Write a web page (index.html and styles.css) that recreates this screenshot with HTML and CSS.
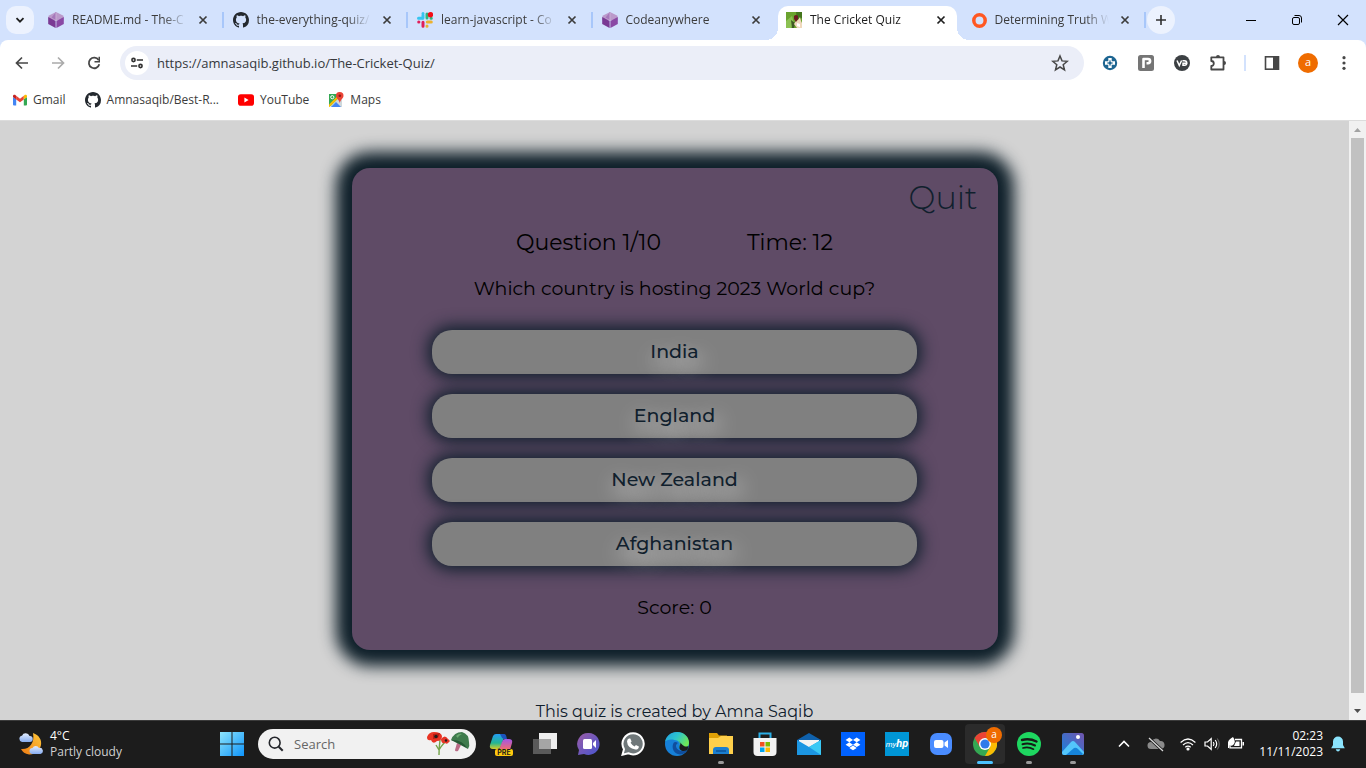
FILE: index.html
```html
<!DOCTYPE html>
<html lang="en">
<head>
<meta charset="utf-8">
<meta name="viewport" content="width=device-width, initial-scale=1">
<title>The Cricket Quiz</title>
<link rel="stylesheet" href="styles.css">
</head>
<body>
<svg class="defs" aria-hidden="true">
  <defs>
    <symbol id="close" viewBox="0 0 16 16"><path d="M4.500 4.500l7 7M11.500 4.500l-7 7" fill="none" stroke="currentColor" stroke-width="1.700"/></symbol>
    <symbol id="cube" viewBox="0 0 16 16"><path fill="#bb9acb" d="M8 0l7.500 3.700v4L8 8.600.500 7.700v-4z"/><path fill="#a678bb" d="M8 0v8L3.500 5.500z"/><path fill="#7a3a94" d="M.2 5l7.400 4v7L.2 12z"/><path fill="#8a49a5" d="M15.800 5L8.400 9v7l7.400-4z"/><path fill="#c9aed6" d="M7.500 1h1v8h-1z"/></symbol>
    <symbol id="github" viewBox="0 0 16 16"><path fill="#24292f" d="M8 0C3.580 0 0 3.580 0 8c0 3.540 2.290 6.530 5.470 7.590.4.070.55-.17.55-.38 0-.19-.01-.82-.01-1.490-2.010.37-2.530-.49-2.690-.94-.09-.23-.48-.94-.82-1.130-.28-.15-.68-.52-.01-.53.63-.01 1.080.58 1.230.82.72 1.210 1.870.87 2.330.66.070-.52.28-.87.51-1.070-1.780-.2-3.640-.89-3.640-3.950 0-.87.31-1.590.82-2.150-.08-.2-.36-1.020.08-2.120 0 0 .67-.21 2.200.82.64-.18 1.320-.27 2-.27s1.360.09 2 .27c1.530-1.040 2.200-.82 2.200-.82.44 1.100.16 1.920.08 2.120.51.56.82 1.270.82 2.150 0 3.070-1.870 3.750-3.650 3.950.29.25.54.73.54 1.480 0 1.070-.01 1.930-.01 2.200 0 .21.15.46.55.38A8.010 8.010 0 0 0 16 8c0-4.420-3.580-8-8-8z"/></symbol>
  </defs>
</svg>

<header class="browser">
  <div class="tabstrip">
    <button class="tab-search" aria-label="Search tabs"><svg width="12" height="12" viewBox="0 0 12 12"><path d="M2.500 4.200L6 7.700l3.500-3.500" fill="none" stroke="#1f1f1f" stroke-width="1.800"/></svg></button>
    <div class="tabs">
      <div class="tab divided"><button class="tab-link"><svg width="16" height="16"><use href="#cube"/></svg><span class="tab-title">README.md - The-C</span></button><button class="tab-close" aria-label="Close tab"><svg width="16" height="16"><use href="#close"/></svg></button></div>
      <div class="tab divided"><button class="tab-link"><svg width="16" height="16"><use href="#github"/></svg><span class="tab-title">the-everything-quiz/</span></button><button class="tab-close" aria-label="Close tab"><svg width="16" height="16"><use href="#close"/></svg></button></div>
      <div class="tab divided"><button class="tab-link"><svg width="16" height="16" viewBox="0 0 16 16"><g stroke-width="3" stroke-linecap="round"><path stroke="#36c5f0" d="M1.500 6.200h4M6 1.500v.2"/><path stroke="#36c5f0" d="M6 3.500v2.500"/><path stroke="#2eb67d" d="M10 2v4M14.300 6.200h-.3"/><path stroke="#ecb22e" d="M10.300 10h4M10 14.300v-.2"/><path stroke="#e01e5a" d="M6 10.200v4M1.700 10h.2"/></g><circle cx="13.500" cy="2.700" r="2.700" fill="#f30d16"/></svg><span class="tab-title">learn-javascript - Co</span></button><button class="tab-close" aria-label="Close tab"><svg width="16" height="16"><use href="#close"/></svg></button></div>
      <div class="tab"><button class="tab-link"><svg width="16" height="16"><use href="#cube"/></svg><span class="tab-title">Codeanywhere</span></button><button class="tab-close" aria-label="Close tab"><svg width="16" height="16"><use href="#close"/></svg></button></div>
      <div class="tab active"><button class="tab-link"><svg width="16" height="16" viewBox="0 0 16 16"><path fill="#6ba32e" d="M0 0h16v16H0z"/><path fill="#8cc152" d="M0 9l6-5 2 7-3 5H0z"/><path fill="#43751c" d="M10 0h6v6l-5 2z"/><path fill="#3f5a24" d="M5 8l4 3-1 5H6z"/><path fill="#f0d9bd" d="M10 9l2-1 2-3 1 4 1 2v5h-5l-3-4z"/><path fill="#fff" d="M11 11l3 1v3l-3-1z"/><path fill="#6c1a22" d="M8 4q2-2 4 0v3l-2 3-2-3z"/></svg><span class="tab-title">The Cricket Quiz</span></button><button class="tab-close" aria-label="Close tab"><svg width="16" height="16"><use href="#close"/></svg></button></div>
      <div class="tab divided"><button class="tab-link"><svg width="16" height="16" viewBox="0 0 16 16"><circle cx="8.500" cy="8.500" r="5.700" fill="none" stroke="#ff5722" stroke-width="3.500"/></svg><span class="tab-title">Determining Truth W</span></button><button class="tab-close" aria-label="Close tab"><svg width="16" height="16"><use href="#close"/></svg></button></div>
    </div>
    <button class="new-tab" aria-label="New tab"><svg width="12" height="12" viewBox="0 0 12 12"><path d="M6 1v10M1 6h10" stroke="#303030" stroke-width="1.600"/></svg></button>
    <div class="window-controls">
      <button aria-label="Minimise"><svg width="12" height="12" viewBox="0 0 12 12"><path d="M1 6.500h10" stroke="#000"/></svg></button>
      <button aria-label="Restore"><svg width="12" height="12" viewBox="0 0 12 12" fill="none" stroke="#000"><rect x="1.500" y="3.500" width="7" height="7" rx="1.500"/><path d="M3.500 1.500H8a2.500 2.500 0 0 1 2.500 2.500v4.500"/></svg></button>
      <button aria-label="Close window"><svg width="12" height="12" viewBox="0 0 12 12"><path d="M1 1l10 10M11 1L1 11" stroke="#000" stroke-width="1.200"/></svg></button>
    </div>
  </div>

  <div class="toolbar">
    <button class="tool" aria-label="Back"><svg width="16" height="16" viewBox="0 0 16 16" fill="none" stroke="#474747" stroke-width="1.700"><path d="M14 8H3M8 2.500L2.500 8 8 13.500"/></svg></button>
    <button class="tool" aria-label="Forward"><svg width="16" height="16" viewBox="0 0 16 16" fill="none" stroke="#ababab" stroke-width="1.700"><path d="M2 8h11M8 2.500L13.500 8 8 13.500"/></svg></button>
    <button class="tool" aria-label="Reload"><svg width="16" height="16" viewBox="0 0 16 16"><path d="M12.600 5A5.300 5.300 0 1 0 13.300 9.300" fill="none" stroke="#474747" stroke-width="1.800"/><path fill="#474747" d="M14 1.800v5.700H8.500V6h4V1.800z"/></svg></button>
    <div class="omnibox">
      <button class="site-info" aria-label="View site information"><svg width="14" height="14" viewBox="0 0 14 14" fill="none" stroke="#303030" stroke-width="1.600"><circle cx="3.500" cy="4" r="1.600"/><path d="M6.800 4H13M1 10h6.200"/><circle cx="10.500" cy="10" r="1.600"/></svg></button>
      <input class="address" type="text" aria-label="Address" value="https://amnasaqib.github.io/The-Cricket-Quiz/">
      <button class="tool star" aria-label="Bookmark this page"><svg width="18" height="18" viewBox="0 0 18 18"><path d="M9 2l2 4.900 5.300.4-4.100 3.400 1.300 5.100L9 13l-4.500 2.800 1.300-5.100-4.100-3.400 5.300-.4z" fill="none" stroke="#474747" stroke-width="1.500"/></svg></button>
    </div>
    <div class="extensions">
      <button class="tool" aria-label="Extension"><svg width="16" height="16" viewBox="0 0 16 16"><circle cx="8" cy="8" r="7.200" fill="#1d6591"/><path d="M8 3v10M3 8h10" stroke="#fff" stroke-width="3.400"/><circle cx="8" cy="8" r="1.500" fill="#1d6591"/><path d="M8 5.200v5.600M5.200 8h5.600" stroke="#1d6591"/></svg></button>
      <button class="tool" aria-label="Extension"><svg width="16" height="16" viewBox="0 0 16 16"><rect width="16" height="16" rx="2.500" fill="#757575"/><path d="M5.500 13V4h4.500a2 2 0 0 1 0 4.200H8.500" fill="none" stroke="#fff" stroke-width="2.600" stroke-linejoin="round"/></svg></button>
      <button class="tool" aria-label="Extension"><svg width="16" height="16" viewBox="0 0 16 16"><circle cx="8" cy="8" r="8" fill="#3c4043"/><path d="M3 5.500l2.300 5L7.600 5.500M8.500 5.800h2a2.200 2.200 0 0 1 0 4.500H9V8.200h4.500" fill="none" stroke="#fff" stroke-width="1.500"/></svg></button>
      <button class="tool" aria-label="Extensions"><svg width="18" height="18" viewBox="0 0 18 18"><path d="M2.300 3.300H14.500V15.500H2.300V12a2.500 2.500 0 0 0 0-5z" fill="none" stroke="#474747" stroke-width="1.800" stroke-linejoin="round"/><path fill="#474747" d="M7 3a2 2 0 0 1 4 0zM15 7a2 2 0 0 1 0 4z"/></svg></button>
      <span class="rule"></span>
      <button class="tool" aria-label="Side panel"><svg width="16" height="16" viewBox="0 0 16 16"><rect x="1.500" y="1.800" width="13" height="12.400" fill="none" stroke="#474747" stroke-width="1.600"/><path fill="#474747" d="M9 1.500h5.500v13H9z"/></svg></button>
      <button class="tool" aria-label="Profile"><span class="avatar">a</span></button>
      <button class="tool" aria-label="Menu"><svg width="16" height="16" viewBox="0 0 16 16" fill="#474747"><circle cx="8" cy="2.700" r="1.600"/><circle cx="8" cy="8" r="1.600"/><circle cx="8" cy="13.300" r="1.600"/></svg></button>
    </div>
  </div>

  <nav class="bookmarks" aria-label="Bookmarks">
    <a href="#gmail"><svg width="14" height="16" viewBox="0 0 14 16"><path fill="#4285f4" d="M0 5l3.200 2.200v6.300H1a1 1 0 0 1-1-1z"/><path fill="#34a853" d="M14 5l-3.200 2.200v6.300H13a1 1 0 0 0 1-1z"/><path fill="#ea4335" d="M3.200 3.800L7 6.700l3.800-2.900v3.600L7 10.300 3.200 7.400z"/><path fill="#c5221f" d="M0 4.300C0 2.700 1.700 2.500 2.600 3.200l.6.600v3.600L0 5z"/><path fill="#fbbc04" d="M14 4.300c0-1.600-1.700-1.800-2.600-1.100l-.6.600v3.600L14 5z"/></svg>Gmail</a>
    <a href="#repo"><svg width="16" height="16"><use href="#github"/></svg>Amnasaqib/Best-R...</a>
    <a href="#youtube"><svg width="16" height="16" viewBox="0 0 16 16"><rect y="2.300" width="16" height="11.400" rx="2.800" fill="#f00"/><path fill="#fff" d="M6.400 5.600v4.800L10.600 8z"/></svg>YouTube</a>
    <a href="#maps"><svg width="16" height="16" viewBox="0 0 16 16"><path fill="#34a853" d="M1 2h12v2L3 14H1z"/><path fill="#cfd8dc" d="M2 15L12 5l2 3v7z"/><path fill="#4285f4" d="M3 15l5-5 5 5z"/><path fill="#fbbc04" d="M1 12.500L10.500 3l1.500 1.500L1.500 15H1z"/><circle cx="4.300" cy="5.200" r="1.600" fill="none" stroke="#fff"/><path fill="#ea4335" d="M11.800 0A3.700 3.700 0 0 1 15.500 3.700c0 2.500-2.900 3.500-3.700 7.300C11 7.200 8 6.200 8 3.700A3.700 3.700 0 0 1 11.800 0z"/><circle cx="11.800" cy="3.700" r="1.300" fill="#8c1a12"/></svg>Maps</a>
  </nav>
</header>

<div class="viewport">
  <main class="page">
    <section class="quiz">
      <a class="quit" href="#quit">Quit</a>
      <div class="status"><span>Question 1/10</span><span>Time: 12</span></div>
      <h1 class="question">Which country is hosting 2023 World cup?</h1>
      <div class="options">
        <button>India</button>
        <button>England</button>
        <button>New Zealand</button>
        <button>Afghanistan</button>
      </div>
      <p class="score">Score: 0</p>
    </section>
    <footer class="credit">This quiz is created by Amna Saqib</footer>
  </main>
  <div class="scrollbar" aria-hidden="true">
    <svg width="17" height="17" viewBox="0 0 17 17"><path fill="#a3a3a3" d="M5 11h7L8.500 7z"/></svg>
    <span class="thumb"></span>
    <svg width="17" height="17" viewBox="0 0 17 17"><path fill="#505050" d="M5 6h7l-3.500 4z"/></svg>
  </div>
</div>

<footer class="taskbar">
  <button class="weather">
    <svg width="24" height="24" viewBox="0 0 24 24"><defs><linearGradient id="moon" x1="1" y1="0" x2="0" y2="1"><stop offset="0" stop-color="#ffc93c"/><stop offset="1" stop-color="#ee7a12"/></linearGradient><linearGradient id="cloud" x1="0" y1="0" x2="0" y2="1"><stop offset="0" stop-color="#e4eeff"/><stop offset="1" stop-color="#86acf0"/></linearGradient></defs><path fill="url(#moon)" d="M14 1c6 2 9 7 8 12s-6 10-12 9.500C6 22 3.500 20 2 17c8 1 14-6 12-16z"/><path fill="url(#cloud)" d="M3 10a3.200 3.200 0 0 1 0-6.300A4 4 0 0 1 10.500 4 3 3 0 0 1 11 10z"/><path fill="url(#cloud)" d="M13.500 22a3 3 0 0 1 0-6A3.600 3.600 0 0 1 20 16a3 3 0 0 1 1.500 6z"/></svg>
    <span class="weather-text"><span class="temp">4°C</span><span class="sky">Partly cloudy</span></span>
  </button>
  <button class="app" aria-label="Start"><svg width="24" height="24" viewBox="0 0 24 24"><defs><linearGradient id="win" x1="0" y1="0" x2="1" y2="1"><stop offset="0" stop-color="#8ee5fb"/><stop offset="1" stop-color="#0e94fb"/></linearGradient></defs><path fill="url(#win)" d="M0 0h11.500v11.500H0zM12.500 0H24v11.500H12.500zM0 12.500h11.500V24H0zM12.500 12.500H24V24H12.500z"/></svg></button>
  <label class="search">
    <svg width="16" height="16" viewBox="0 0 16 16"><circle cx="6.700" cy="6.700" r="5.400" fill="none" stroke="#24262b" stroke-width="1.600"/><path d="M10.700 10.700l4 4" stroke="#24262b" stroke-width="2"/></svg>
    <input type="search" aria-label="Search" placeholder="Search">
    <svg width="43" height="26" viewBox="0 0 43 26"><path d="M13 9q-1 8-1 15M12.500 18q4-6 7-8M12 19l-3-5" fill="none" stroke="#72a348" stroke-width="1.400"/><path fill="#e93323" d="M0 6q2-5 7-5 7 0 8 4 0 5-5 5-4 4-6-1-4 1-4-3z"/><path fill="#b91c12" d="M6 3l7-1-2 5-5 1z"/><circle cx="9" cy="5.500" r="1.700" fill="#231b1b"/><path fill="#e63527" d="M14 8q4-5 7 0 3 2 1 3-2 3-4 1-4 1-4-4z"/><circle cx="19" cy="9.500" r="1.200" fill="#231b1b"/><path fill="#b96b86" d="M30 12l4 2-3 6q-3 1-3-1z"/><path fill="#3f7b4d" d="M24 9q3-8 11-8 7 2 7 10 1 4-1 7-5-6-17-9z"/><path fill="#255a35" d="M24 9q11-1 17 9-9-5-17-9z"/><path fill="#6aaa70" d="M29 5q3-3 6-2-4 2-4 4z"/></svg>
  </label>
  <div class="apps">
    <button class="app" aria-label="Copilot"><svg width="24" height="24" viewBox="0 0 24 24"><defs><linearGradient id="cpa" x1="0" y1="0" x2="0" y2="1"><stop offset="0" stop-color="#249cf4"/><stop offset=".6" stop-color="#23b693"/><stop offset="1" stop-color="#d6cd27"/></linearGradient><linearGradient id="cpb" x1="0" y1="0" x2="0" y2="1"><stop offset="0" stop-color="#a156e8"/><stop offset="1" stop-color="#f66d69"/></linearGradient></defs><path fill="url(#cpa)" d="M7 2h7q2 0 1.500 2L12 14q-1 3-4 3H4q-4 0-3-4L4 4q1-2 3-2z"/><path fill="#1b54bd" d="M11 2h4q2 0 2.500 3l.5 2h-3q-2 0-3-3z"/><path fill="url(#cpb)" d="M16 7h4q4 0 3 4l-2 7H10l3-8q1-3 3-3z"/><rect x="6" y="17" width="18" height="7" rx="2" fill="#ffc90e"/><text x="15" y="23" class="pre" text-anchor="middle">PRE</text></svg></button>
    <button class="app" aria-label="Task view"><svg width="24" height="24" viewBox="0 0 24 24"><path fill="#eee" d="M6 1h18v16H6z"/><path fill="#5a5a5a" d="M0 7h18v15H0z"/><path fill="#a5a5a5" d="M6 7h12v10H6z"/></svg></button>
    <button class="app" aria-label="Chat"><svg width="24" height="24" viewBox="0 0 24 24"><defs><linearGradient id="chat" x1="0" y1="0" x2="1" y2="1"><stop offset="0" stop-color="#9b5ca6"/><stop offset="1" stop-color="#4755d0"/></linearGradient></defs><path fill="url(#chat)" d="M12 1a11 11 0 1 1-5 21L1 23l1-5A11 11 0 0 1 12 1z"/><rect x="6" y="7" width="9" height="10" rx="1.500" fill="#fff"/><path fill="#fff" d="M16 11l3-3v8l-3-3z"/></svg></button>
    <button class="app" aria-label="WhatsApp"><svg width="24" height="24" viewBox="0 0 24 24"><path d="M12.200 1.200a10.600 10.600 0 1 1-5 20L1.500 22.700 3 17.200a10.600 10.600 0 0 1 9.200-16z" fill="#6f7779" stroke="#fff" stroke-width="2"/><path fill="#fff" d="M8 6.500h1.300l1.300 3-1 1.300q1.400 2.500 4 3.600l1.300-1.500 3 1.500q0 3-3.400 3.200-8-1.500-8.500-8.200.2-2.200 2-2.900z"/></svg></button>
    <button class="app" aria-label="Edge"><svg width="24" height="24" viewBox="0 0 24 24"><defs><linearGradient id="edge" x1="0" y1="0" x2="1" y2=".5"><stop offset="0" stop-color="#209fe2"/><stop offset=".5" stop-color="#2cc4cf"/><stop offset="1" stop-color="#6ee857"/></linearGradient></defs><circle cx="12" cy="12" r="12" fill="#1680d8"/><path fill="url(#edge)" d="M0 10C1 4 6 0 12 0c7 0 12 5 12 10.500 0 4-3 6-6 6-3 0-4.500-1-3.500-2.500C16 11 13 8 9.500 8 5 7 1 8 0 10z"/><path fill="#104e9d" d="M8.500 11C6 16 9 22 15 22.500c3 0 6-2 7.500-4.500-5 2.500-11 .5-11.500-4 0-1.500 1-2.500 2-3-2-1.500-3.500-1.500-4.500 0z"/><path fill="#1c1c1c" d="M14.500 14c2-3 0-5 0-4 3 2 4 6 9 4l-1 4c-4 2-9 1-8-4z"/></svg></button>
    <button class="app running" aria-label="File Explorer"><svg width="24" height="24" viewBox="0 0 24 24"><path fill="#e0a106" d="M0 1h8l2 2.500h8V8H0z"/><path fill="#ffd04b" d="M0 6h9l3-2h12v18H0z"/><path fill="#1b7fd0" d="M4 22v-4q0-3 3-3h10q3 0 3 3v4z"/><path fill="#0f5ea8" d="M7 18h10v2H7z"/></svg></button>
    <button class="app" aria-label="Microsoft Store"><svg width="24" height="24" viewBox="0 0 24 24"><path d="M6.500 7V1.500h11V7" fill="none" stroke="#2aaee6" stroke-width="2"/><path fill="#f2f2f2" d="M.5 6h23v14a4 4 0 0 1-4 4h-15a4 4 0 0 1-4-4z"/><path fill="#f25022" d="M7 10h4.500v4.500H7z"/><path fill="#7fba00" d="M12.500 10H17v4.500h-4.500z"/><path fill="#00a4ef" d="M7 15.500h4.500V20H7z"/><path fill="#ffb900" d="M12.500 15.500H17V20h-4.500z"/></svg></button>
    <button class="app" aria-label="Mail"><svg width="24" height="24" viewBox="0 0 24 24"><path fill="#0f61ac" d="M0 8l12-7 12 7v8H0z"/><path fill="#f3f3f3" d="M2 8h20v7l-10 3-10-3z"/><path fill="#1c96e2" d="M0 8l12 7 12-7v15H0z"/><path fill="#3ac8f4" d="M24 8v15L12 15z"/></svg></button>
    <button class="app" aria-label="Dropbox"><svg width="24" height="24" viewBox="0 0 24 24"><path fill="#0061fe" d="M0 0h24v24H0z"/><path fill="#fff" d="M8.300 5.500L12 7.900l-3.700 2.400-3.700-2.400zM15.700 5.500l3.700 2.400-3.700 2.400L12 7.900zM8.300 10.300l3.700 2.400-3.700 2.400-3.700-2.400zM15.700 10.300l3.700 2.400-3.700 2.400-3.700-2.400zM12 13.500l3.700 2.400-3.700 2.400-3.700-2.400z"/></svg></button>
    <button class="app" aria-label="myHP"><span class="myhp">my<b>hp</b></span></button>
    <button class="app" aria-label="Zoom"><svg width="24" height="24" viewBox="0 0 24 24"><rect x="1" y="1" width="22" height="22" rx="7" fill="#4a8cff"/><rect x="5" y="8" width="9.500" height="8" rx="2" fill="#fff"/><path fill="#fff" d="M15.500 10.500L19 8v8l-3.500-2.500z"/></svg></button>
    <button class="app running current" aria-label="Chrome"><svg width="24" height="24" viewBox="0 0 24 24"><circle cx="12" cy="12" r="12" fill="#34a853"/><path fill="#ea4335" d="M1.600 6A12 12 0 0 1 22.400 6H12L7 15z"/><path fill="#fbbc04" d="M22.400 6A12 12 0 0 1 12 24l5.200-9L16 6z"/><circle cx="12" cy="12" r="6" fill="#fff"/><circle cx="12" cy="12" r="4.600" fill="#2f7bea"/></svg><span class="avatar badge">a</span></button>
    <button class="app running" aria-label="Spotify"><svg width="24" height="24" viewBox="0 0 24 24"><circle cx="12" cy="12" r="12" fill="#1ed760"/><g fill="none" stroke="#151b17" stroke-linecap="round"><path stroke-width="2.400" d="M5 8q7.500-2 14.500 1.500"/><path stroke-width="2" d="M5.500 12.200q6.500-1.800 12.500 1.300"/><path stroke-width="1.700" d="M6 16q5.500-1.500 10.500 1.200"/></g></svg></button>
    <button class="app running" aria-label="Photos"><svg width="24" height="24" viewBox="0 0 24 24"><defs><linearGradient id="photo" x1="0" y1="1" x2="1" y2="0"><stop offset="0" stop-color="#1782dc"/><stop offset="1" stop-color="#7254ad"/></linearGradient></defs><rect x="1" y="1" width="22" height="22" rx="2.500" fill="url(#photo)"/><path fill="#53c6fb" d="M1 20l9-10q2-2 4 0l9 10v1a2 2 0 0 1-2 2H3a2 2 0 0 1-2-2z"/><path fill="#1684da" d="M5 23l8-7q2-1 4 1l5 5-1 1z"/><circle cx="17" cy="5" r="2" fill="#fff"/></svg></button>
  </div>
  <div class="tray">
    <button class="tray-icon" aria-label="Show hidden icons"><svg width="12" height="12" viewBox="0 0 12 12"><path d="M1 8.500l5-5 5 5" fill="none" stroke="#fff" stroke-width="1.600"/></svg></button>
    <button class="tray-icon" aria-label="OneDrive"><svg width="18" height="16" viewBox="0 0 18 16"><path fill="#8a8a8a" d="M4 13a3.500 3.500 0 0 1 0-7 5 5 0 0 1 9-1 4 4 0 0 1 1 8z"/><path d="M2 2l14 13" stroke="#1c1c1c" stroke-width="3"/><path d="M2 2l14 13" stroke="#ddd" stroke-width="1.200"/></svg></button>
    <button class="status-icons" aria-label="Network, volume and battery">
      <svg width="16" height="16" viewBox="0 0 16 16" fill="none" stroke="#fff" stroke-width="1.200"><path d="M.6 6.500q7.400-7 14.800 0M3 9q5-4.800 10 0M5.300 11.300q2.700-2.500 5.400 0"/><circle cx="8" cy="13" r="1" fill="#fff"/></svg>
      <svg width="16" height="16" viewBox="0 0 16 16" fill="none" stroke="#fff" stroke-width="1.200"><path d="M1 6h2.500l3.700-3.300v10.600L3.500 10H1z"/><path d="M9.300 6q1.500 2 0 4M11.200 4q3 4 0 8"/><path stroke="#606060" d="M13.200 2.500q4.200 5.500 0 11"/></svg>
      <svg width="16" height="16" viewBox="0 0 16 16"><path d="M7 3.500h6.500v8.300H2V9" fill="none" stroke="#fff" stroke-width="1.300"/><path fill="#fff" d="M14.500 6H16v3.500h-1.500zM8 5.500h3.500V10H6zM0 9q-1-5 5-8 3 4 1 7-2 3-4.500 1L1 12H0z"/></svg>
    </button>
    <button class="clock"><span>02:23</span><span>11/11/2023</span></button>
    <button class="bell" aria-label="Notifications"><svg width="14" height="16" viewBox="0 0 14 16"><path fill="#8be4fd" d="M7 .5a5 5 0 0 1 5 5V9l1.800 3.300H.2L2 9V5.500a5 5 0 0 1 5-5zM4.700 13.300h4.600Q8.500 15.500 7 15.500t-2.300-2.200z"/></svg></button>
  </div>
</footer>
</body>
</html>
```

FILE: styles.css
```css
* {
  box-sizing: border-box;
}

body {
  margin: 0;
  height: 100vh;
  display: flex;
  flex-direction: column;
  overflow: hidden;
  font: 12px/16px "Segoe UI", "Open Sans", "Noto Sans", sans-serif;
  color: #3c3c3c;
}

button {
  display: flex;
  align-items: center;
  justify-content: center;
  margin: 0;
  padding: 0;
  border: 0;
  background: none;
  color: inherit;
  font: inherit;
}

svg {
  flex: none;
}

.defs {
  position: absolute;
  width: 0;
  height: 0;
}

/* Tab strip */
.browser {
  flex: none;
  background: #d3e2fd;
}

.tabstrip {
  display: flex;
  align-items: center;
  height: 40px;
  padding-left: 6px;
}

.tab-search,
.new-tab {
  flex: none;
  width: 28px;
  height: 28px;
  border-radius: 10px;
  background: #ecf2fe;
}

.new-tab {
  border-radius: 50%;
}

.tabs {
  display: flex;
  flex: 1;
  align-self: stretch;
  min-width: 0;
  margin-left: 6px;
}

.tab {
  position: relative;
  display: flex;
  align-items: center;
  gap: 8px;
  flex: 1 1 0;
  min-width: 0;
  margin: 6px 6px 0 0;
  padding: 0 8px 6px;
}

.tab-link {
  flex: 1;
  min-width: 0;
  gap: 8px;
}

.tab-title {
  flex: 1;
  overflow: hidden;
  white-space: nowrap;
  text-align: left;
  -webkit-mask-image: linear-gradient(to left, transparent, #000 24px);
  mask-image: linear-gradient(to left, transparent, #000 24px);
}

.tab-close {
  flex: none;
}

.tab.divided::after {
  content: "";
  position: absolute;
  right: -5px;
  top: 6px;
  width: 2px;
  height: 16px;
  background: #a8c7fa;
}

.tab.active {
  border-radius: 10px 10px 0 0;
  background: #fff;
  color: #1f1f1f;
}

.tab.active::before,
.tab.active::after {
  content: "";
  position: absolute;
  bottom: 0;
  width: 12px;
  height: 12px;
}

.tab.active::before {
  right: 100%;
  background: radial-gradient(circle at 0 0, transparent 12px, #fff 12px);
}

.tab.active::after {
  left: 100%;
  background: radial-gradient(circle at 100% 0, transparent 12px, #fff 12px);
}

.window-controls {
  display: flex;
  align-self: stretch;
  margin-left: 53px;
}

.window-controls button {
  width: 46px;
}

/* Toolbar */
.toolbar {
  display: flex;
  align-items: center;
  height: 46px;
  padding: 0 4px;
  border-radius: 8px 8px 0 0;
  background: #fff;
}

.tool {
  flex: none;
  width: 36px;
  height: 34px;
}

.omnibox {
  display: flex;
  align-items: center;
  flex: 1;
  height: 34px;
  margin: 0 8px;
  padding: 0 6px 0 5px;
  border-radius: 17px;
  background: #ebeef8;
}

.site-info {
  flex: none;
  width: 24px;
  height: 24px;
  border-radius: 50%;
  background: #fff;
}

.address {
  flex: 1;
  min-width: 0;
  padding: 0 8px;
  border: 0;
  background: none;
  color: #35383c;
  font: 13px/20px "Segoe UI", "Open Sans", "Noto Sans", sans-serif;
}

.extensions {
  display: flex;
  align-items: center;
}

.rule {
  width: 2px;
  height: 16px;
  margin: 0 8px;
  background: #d3e2fd;
}

.avatar {
  width: 20px;
  height: 20px;
  border-radius: 50%;
  background: #ef6c00;
  color: #fff;
  font-size: 11px;
  line-height: 18px;
  text-align: center;
}

/* Bookmarks */
.bookmarks {
  display: flex;
  gap: 19px;
  padding: 0 13px 6px;
  border-bottom: 1px solid #dcdcdc;
  background: #fff;
}

.bookmarks a {
  display: flex;
  align-items: center;
  gap: 6px;
  height: 28px;
  color: inherit;
  text-decoration: none;
}

/* Quiz page */
.viewport {
  display: flex;
  flex: 1;
  min-height: 0;
}

.page {
  flex: 1;
  overflow: hidden;
  padding-top: 47px;
  background: #d3d3d3;
  color: #000;
  font: 400 19px/28px Montserrat, Inter, sans-serif;
  text-align: center;
}

.quiz {
  width: 90%;
  max-width: 646px;
  margin: 0 auto;
  padding: 10px 0 28px;
  border-radius: 18px;
  background: #5f4b66;
  box-shadow: 0 0 16px 16px #0e1f29;
}

.quit {
  display: block;
  padding-right: 20px;
  color: #10202d;
  font-size: 32px;
  font-weight: 300;
  line-height: 40px;
  text-align: right;
  text-decoration: none;
}

.status {
  display: flex;
  justify-content: center;
  gap: 86px;
  margin-top: 11px;
  font-size: 22px;
}

.question {
  margin: 18px 0 27px;
  font: inherit;
}

.options {
  display: grid;
  gap: 20px;
  width: 75%;
  margin: 0 auto;
}

.options button {
  height: 44px;
  border-radius: 20px;
  background: #808080;
  box-shadow: 0 0 16px 4px #10202d;
  color: #10202d;
  font-weight: 500;
  text-shadow: 3px 8px 20px #fff;
}

.score {
  margin: 28px 0 0;
}

.credit {
  margin-top: 50px;
  color: #10202d;
  font-size: 16px;
  line-height: 24px;
}

.scrollbar {
  display: flex;
  flex-direction: column;
  width: 17px;
  background: #f1f1f1;
}

.thumb {
  flex: 1;
  margin: 0 2px 10px;
  background: #c1c1c1;
}

/* Taskbar */
.taskbar {
  display: flex;
  flex: none;
  align-items: center;
  height: 48px;
  padding-bottom: 1px;
  border-top: 1px solid #3b3b3b;
  background: #1c1c1c;
  color: #fff;
}

.weather {
  flex: none;
  justify-content: flex-start;
  gap: 7px;
  width: 210px;
  padding-left: 19px;
}

.weather-text {
  display: grid;
  text-align: left;
}

.sky {
  color: #d0d0d0;
}

.search {
  display: flex;
  align-items: center;
  flex: none;
  width: 218px;
  height: 30px;
  margin: 0 3px 0 4px;
  padding: 0 6px 0 10px;
  border-radius: 15px;
  background: #f1f1f1;
}

.search input {
  flex: 1;
  min-width: 0;
  padding: 0 10px;
  border: 0;
  background: none;
  font: 13px/20px "Segoe UI", "Open Sans", "Noto Sans", sans-serif;
}

.search input::placeholder {
  color: #666;
}

.apps {
  display: flex;
}

.app {
  position: relative;
  flex: none;
  width: 44px;
  height: 40px;
}

.pre {
  fill: #1c1c1c;
  font: 700 7px Inter, sans-serif;
}

.myhp {
  width: 24px;
  height: 24px;
  background: #0096d6;
  font: italic 8px/24px Roboto, sans-serif;
}

.myhp b {
  font-size: 11px;
}

.app.running::after {
  content: "";
  position: absolute;
  bottom: 0;
  left: 19px;
  width: 6px;
  height: 3px;
  border-radius: 2px;
  background: #9a9a9a;
}

.app.current {
  width: 40px;
  margin: 0 2px;
  border-radius: 4px;
  background: #2b2b2b;
}

.app.current::after {
  left: 12px;
  width: 16px;
  background: #4cc2ff;
}

.badge {
  position: absolute;
  top: 3px;
  right: 3px;
  width: 16px;
  height: 16px;
  font-size: 10px;
  line-height: 14px;
}

.tray {
  display: flex;
  align-items: center;
  margin-left: auto;
  padding-right: 21px;
}

.tray-icon {
  width: 32px;
  height: 40px;
}

.status-icons {
  gap: 8px;
  height: 40px;
  margin-left: 8px;
}

.clock {
  display: grid;
  justify-items: end;
  margin-left: 15px;
}

.bell {
  margin-left: 8px;
}
```
